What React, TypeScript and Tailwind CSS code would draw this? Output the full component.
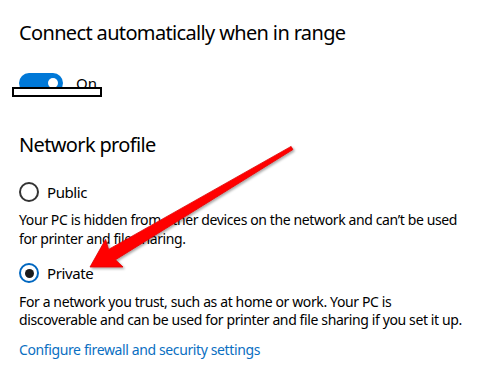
import React from 'react'

function Radio({ checked, label }: { checked?: boolean; label: string }) {
  return (
    <label className="flex h-[20px] items-center gap-[8px]">
      {checked ? (
        <span className="flex h-[20px] w-[20px] items-center justify-center rounded-full border-[2.5px] border-[#0067c0]">
          <span className="h-[9px] w-[9px] rounded-full bg-[#1b1b1b]" />
        </span>
      ) : (
        <span className="h-[20px] w-[20px] rounded-full border-2 border-[#333333]" />
      )}
      <span className="text-[15px] leading-[20px] tracking-[-0.4px]">{label}</span>
    </label>
  )
}

function Arrow() {
  return (
    <svg
      className="pointer-events-none absolute left-0 top-0"
      width="495"
      height="392"
      viewBox="0 0 495 392"
    >
      <defs>
        <filter id="shadow" x="-10%" y="-10%" width="130%" height="130%">
          <feDropShadow dx="1.5" dy="1.5" stdDeviation="1.2" floodColor="#000" floodOpacity="0.35" />
        </filter>
      </defs>
      <polygon
        filter="url(#shadow)"
        fill="#ff0000"
        stroke="#e00000"
        strokeWidth="0.8"
        strokeLinejoin="round"
        points="90,267 123,267 115.5,259.8 292.9,149.6 291.1,146.4 108.6,249.4 105.6,239.3"
      />
    </svg>
  )
}

export default function App() {
  return (
    <div
      className="relative h-[392px] w-[495px] overflow-hidden bg-white pl-[19px] pt-[19px] text-black"
      style={{ fontFamily: '"Noto Sans", "Open Sans", Arial, sans-serif' }}
    >
      <h2 className="text-[20px] leading-[28px] tracking-[-0.65px]">Connect automatically when in range</h2>

      <div className="relative mt-[26px] flex h-[20px] items-center">
        <span className="flex h-[20px] w-[44px] items-center justify-end rounded-full bg-[#0078d7] pr-[5px]">
          <span className="h-[10px] w-[10px] rounded-full bg-white" />
        </span>
        <span className="ml-[13px] text-[15px]">On</span>
        <span className="absolute left-[-7px] top-[14px] h-[10px] w-[90px] border-2 border-black bg-white" />
      </div>

      <h2 className="mt-[38px] text-[20px] leading-[28px] tracking-[-0.65px]">Network profile</h2>

      <div className="mt-[23px]">
        <Radio label="Public" />
      </div>
      <p className="mt-[8px] text-[14px] leading-[19px] tracking-[-0.38px]">
        Your PC is hidden from other devices on the network and can’t be used
        <br />
        for printer and file sharing.
      </p>

      <div className="mt-[15px]">
        <Radio checked label="Private" />
      </div>
      <p className="mt-[10px] text-[14px] leading-[18px] tracking-[-0.38px]">
        For a network you trust, such as at home or work. Your PC is
        <br />
        discoverable and can be used for printer and file sharing if you set it up.
      </p>

      <a href="#" className="mt-[11px] block text-[14px] leading-[19px] tracking-[-0.38px] text-[#0a6fc2]">
        Configure firewall and security settings
      </a>

      <Arrow />
    </div>
  )
}
